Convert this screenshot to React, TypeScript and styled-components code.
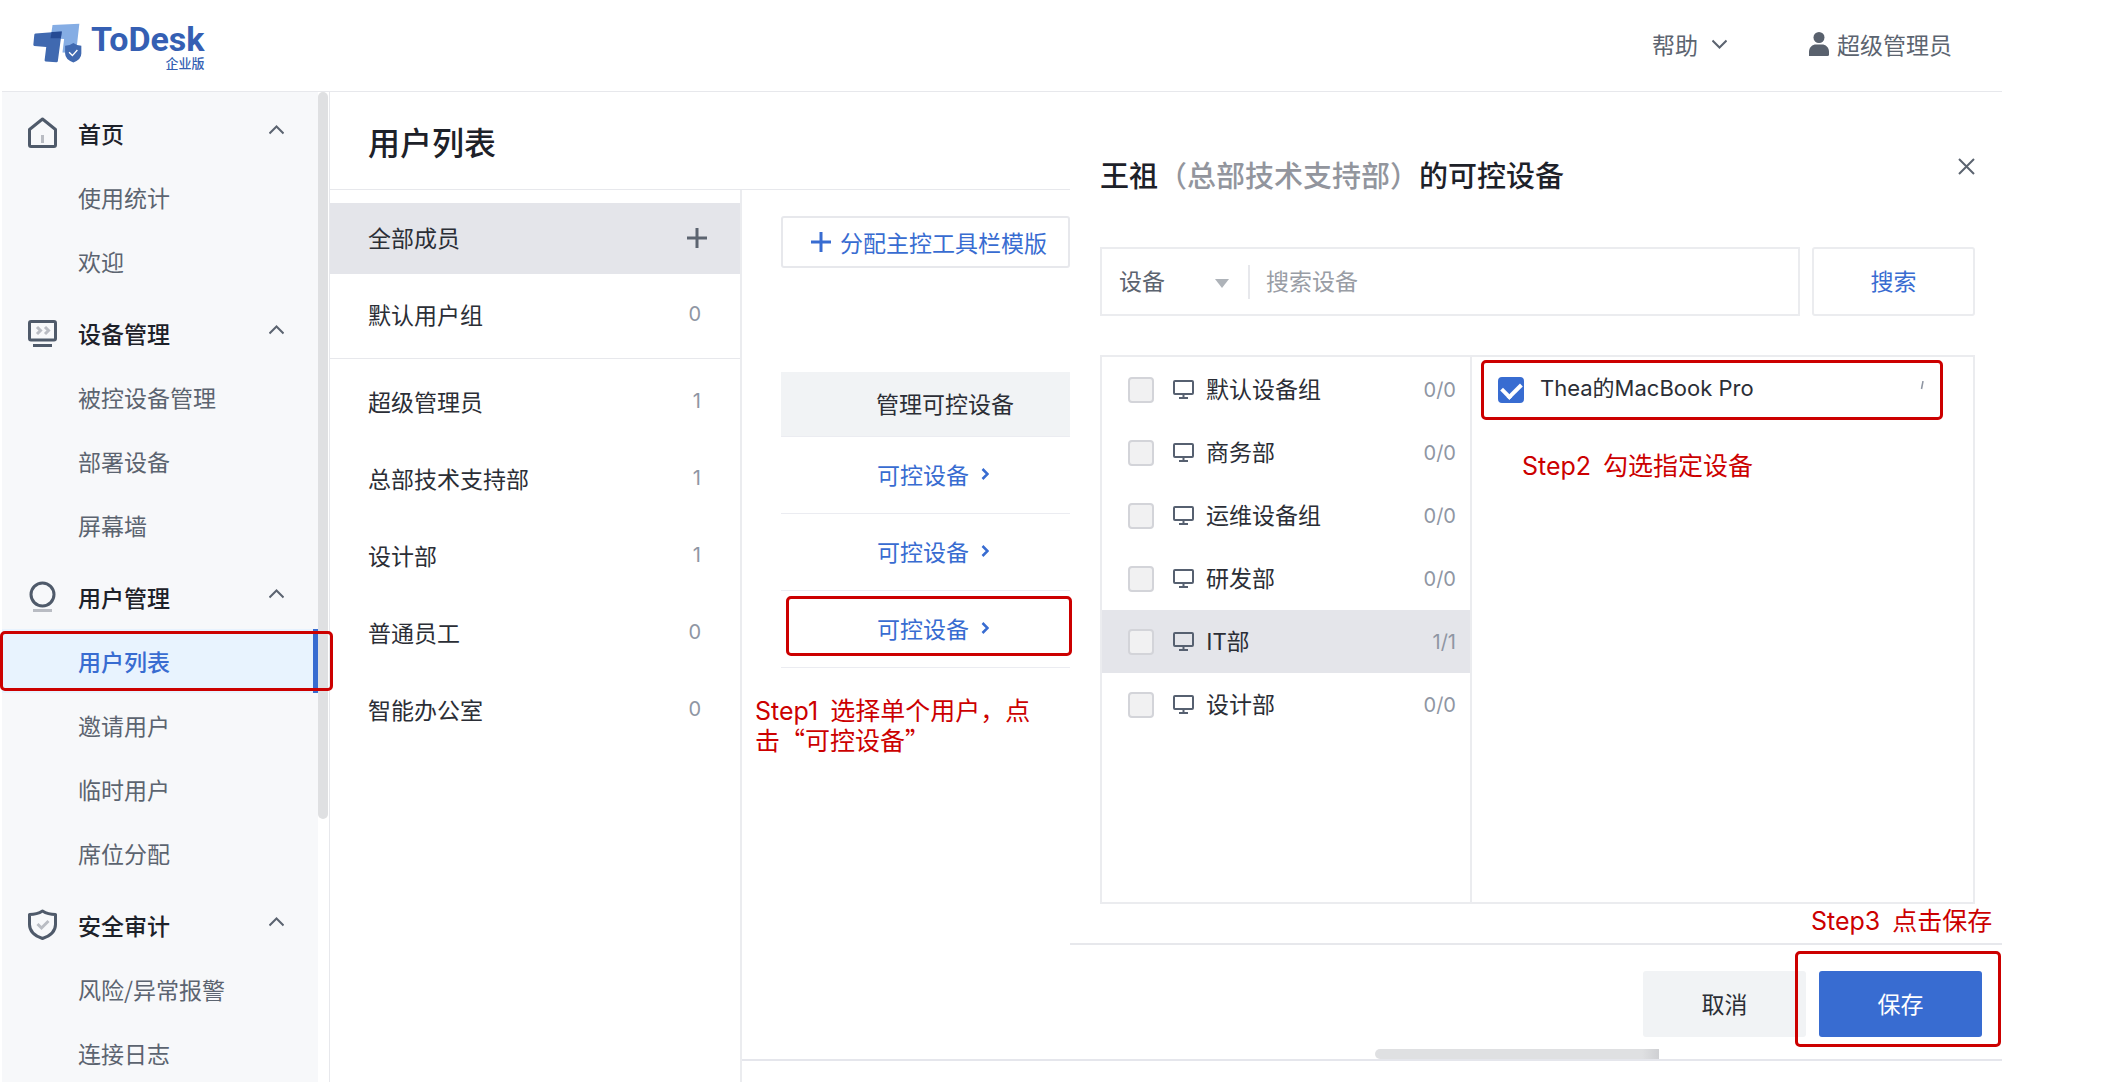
import React, { useState } from "react";
import styled, { createGlobalStyle, css } from "styled-components";

const color = {
  ink: "#1d2129",
  text: "#2b2e36",
  sub: "#5c6470",
  muted: "#8f96a3",
  line: "#e7e8ec",
  fill: "#e4e5ea",
  soft: "#f1f3f5",
  blue: "#386cd1",
  red: "#cc0000",
};

const GlobalStyle = createGlobalStyle`
  * { box-sizing: border-box; }
  body {
    margin: 0;
    background: #fff;
    color: ${color.text};
    font-family: "Noto Sans CJK SC", "Liberation Sans", sans-serif;
    font-size: 23px;
    line-height: 30px;
  }
  button, input, select { font: inherit; color: inherit; }
  h1, h2, ul, p { margin: 0; padding: 0; }
  ul { list-style: none; }
  a { color: inherit; text-decoration: none; }
  svg { display: block; flex: none; }
`;

/* ---------- page frame ---------- */

const Page = styled.div`
  display: flex;
  flex-direction: column;
  height: 100vh;
  padding: 0 125px 0 2px;
  overflow: hidden;
`;

const TopBar = styled.header`
  flex: none;
  display: flex;
  align-items: center;
  justify-content: space-between;
  height: 92px;
  padding: 0 50px 0 31px;
  border-bottom: 1px solid ${color.line};
`;

const Brand = styled.a`
  display: flex;
  align-items: flex-start;
  gap: 9px;
  padding-top: 2px;
  color: #355fb3;
`;

const BrandName = styled.span`
  display: flex;
  flex-direction: column;
  align-items: flex-end;
  font-family: Roboto, sans-serif;
  font-weight: 700;
  font-size: 34px;
  line-height: 32px;
`;

const Edition = styled.span`
  font-family: "Noto Sans CJK SC", sans-serif;
  font-weight: 500;
  font-size: 13px;
  line-height: 16px;
`;

const TopActions = styled.div`
  display: flex;
  gap: 82px;
  padding-bottom: 3px;
  color: ${color.sub};
`;

const PlainButton = styled.button<{ $gap?: number }>`
  display: flex;
  align-items: center;
  gap: ${(p) => p.$gap ?? 0}px;
  padding: 0;
  border: 0;
  background: none;
  cursor: pointer;
`;

const Body = styled.div`
  position: relative;
  flex: 1;
  min-height: 0;
  display: grid;
  grid-template-columns: 328px 412px 328px 1fr;
  grid-template-rows: 98px 1fr 23px;
`;

/* ---------- sidebar ---------- */

const Sidebar = styled.aside`
  grid-row: 1 / 4;
  display: flex;
  min-height: 0;
  overflow: hidden;
  border-right: 1px solid ${color.line};
`;

const Nav = styled.nav`
  flex: 1;
  padding-top: 1px;
  background: #f7f8fa;
`;

const NavGroup = styled.section`
  margin-top: 7px;
`;

const NavHead = styled.button`
  display: grid;
  grid-template-columns: 50px 1fr 15px;
  align-items: center;
  width: 100%;
  height: 65px;
  padding: 0 34px 0 26px;
  border: 0;
  background: none;
  color: ${color.ink};
  font-weight: 500;
  text-align: left;
  cursor: pointer;
`;

const NavLink = styled.a<{ $active?: boolean }>`
  display: flex;
  align-items: center;
  height: 64px;
  padding-left: 76px;
  color: ${color.sub};
  ${(p) =>
    p.$active &&
    css`
      background: #e8f3fe;
      color: ${color.blue};
      font-weight: 500;
      box-shadow: inset -5px 0 ${color.blue};
    `}
`;

const SideTrack = styled.div`
  width: 11px;
`;

const SideThumb = styled.div`
  width: 10px;
  height: 727px;
  border-radius: 5px;
  background: #dfe0e2;
`;

/* ---------- title and member groups ---------- */

const TitleBar = styled.div`
  grid-column: 2 / 4;
  display: flex;
  align-items: center;
  padding: 0 38px;
  border-bottom: 1px solid ${color.line};
`;

const Title = styled.h1`
  color: ${color.ink};
  font-size: 32px;
  font-weight: 500;
  line-height: 40px;
`;

const Groups = styled.div`
  grid-column: 2;
  grid-row: 2 / 4;
  padding-top: 13px;
  border-right: 2px solid #ebecef;
`;

const GroupList = styled.ul`
  display: flex;
  flex-direction: column;
  gap: 6px;
  & + & {
    margin-top: 7px;
    padding-top: 8px;
    border-top: 1px solid ${color.line};
  }
`;

const GroupRow = styled.li<{ $active?: boolean }>`
  display: flex;
  align-items: center;
  justify-content: space-between;
  height: 71px;
  padding: 0 ${(p) => (p.$active ? 33 : 39)}px 3px 38px;
  background: ${(p) => (p.$active ? color.fill : "none")};
`;

const AddButton = styled(PlainButton)`
  padding-top: 2px;
  color: ${color.sub};
`;

const Count = styled.span`
  color: ${color.muted};
  font-family: Inter, sans-serif;
  font-size: 20px;
`;

/* ---------- member table ---------- */

const Members = styled.section`
  position: relative;
  grid-column: 3;
  padding: 26px 0 0 39px;
`;

const AssignButton = styled.button`
  display: flex;
  align-items: center;
  gap: 9px;
  width: 100%;
  height: 52px;
  padding: 0 0 1px 28px;
  border: 2px solid ${color.line};
  border-radius: 3px;
  background: #fff;
  color: ${color.blue};
  white-space: nowrap;
  cursor: pointer;
`;

const Table = styled.table`
  width: 100%;
  margin-top: 104px;
  border-spacing: 0;
  text-align: left;
  th {
    height: 65px;
    padding: 0 0 3px 95px;
    background: ${color.soft};
    border-bottom: 1px solid #ebecf1;
    font-weight: 400;
  }
  td {
    height: 77px;
    padding: 0 0 3px 96px;
    border-bottom: 1px solid #ebecf1;
    color: ${color.blue};
  }
  a {
    display: flex;
    align-items: center;
    gap: 12px;
  }
`;

/* ---------- drawer ---------- */

const Drawer = styled.section`
  grid-column: 4;
  grid-row: 1 / 3;
  display: flex;
  flex-direction: column;
  min-height: 0;
`;

const DrawerMain = styled.div`
  flex: 1;
  display: flex;
  flex-direction: column;
  padding: 54px 27px 39px 30px;
`;

const DrawerHead = styled.div`
  display: flex;
  justify-content: space-between;
  align-items: flex-start;
`;

const DrawerTitle = styled.h2`
  padding: 8px 0 2px;
  color: ${color.ink};
  font-size: 29px;
  font-weight: 500;
  line-height: 40px;
`;

const Dept = styled.span`
  color: #92959d;
`;

const CloseButton = styled(PlainButton)`
  height: 40px;
  color: ${color.sub};
`;

const SearchRow = styled.form`
  display: flex;
  gap: 12px;
  margin-top: 51px;
`;

const SearchBox = styled.div`
  flex: 1;
  display: flex;
  align-items: center;
  height: 69px;
  border: 2px solid #ebecef;
`;

const TypePicker = styled.div`
  display: grid;
  align-items: center;
  width: 148px;
  height: 34px;
  border-right: 2px solid ${color.line};
  color: ${color.sub};
  select, svg { grid-area: 1 / 1; }
  select {
    width: 100%;
    height: 34px;
    padding: 0 0 3px 17px;
    border: 0;
    background: none;
    appearance: none;
  }
  svg {
    justify-self: end;
    margin: 4px 19px 0 0;
    pointer-events: none;
  }
`;

const SearchInput = styled.input`
  flex: 1;
  min-width: 0;
  height: 40px;
  padding: 0 16px 3px;
  border: 0;
  outline: 0;
  background: none;
  &::placeholder { color: #999da5; opacity: 1; }
`;

const Button = styled.button<{ $kind: "outline" | "soft" | "primary" }>`
  width: 163px;
  height: 66px;
  padding: 0 0 3px;
  border: 0;
  border-radius: 3px;
  cursor: pointer;
  ${(p) =>
    p.$kind === "outline" &&
    css`
      height: 69px;
      border: 2px solid #ebecef;
      background: #fff;
      color: ${color.blue};
    `}
  ${(p) => p.$kind === "soft" && css`background: ${color.soft};`}
  ${(p) =>
    p.$kind === "primary" &&
    css`
      background: ${color.blue};
      color: #fff;
    `}
`;

const Picker = styled.div`
  position: relative;
  flex: 1;
  display: grid;
  grid-template-columns: 368px 1fr;
  margin-top: 39px;
  border: 2px solid #ebecef;
`;

const PickerColumn = styled.ul`
  padding-top: 1px;
  & + & { border-left: 2px solid #ebecef; }
`;

const PickerRow = styled.li<{ $active?: boolean; $device?: boolean }>`
  display: flex;
  align-items: center;
  justify-content: space-between;
  height: 63px;
  padding: 0 ${(p) => (p.$device ? 48 : 14)}px 0 26px;
  background: ${(p) => (p.$active ? color.fill : "none")};
  label {
    display: flex;
    align-items: center;
    cursor: pointer;
  }
`;

const Check = styled.input`
  display: grid;
  place-items: center;
  width: 26px;
  height: 26px;
  margin: 0;
  border: 2px solid #d3d4d9;
  border-radius: 4px;
  background: #f1f1f2;
  appearance: none;
  &:checked {
    border-color: ${color.blue};
    background: ${color.blue};
  }
  &:checked::after {
    content: "";
    width: 9px;
    height: 15px;
    margin-bottom: 4px;
    border: solid #fff;
    border-width: 0 4px 4px 0;
    rotate: 45deg;
  }
`;

const GroupName = styled.span`
  display: flex;
  align-items: center;
  gap: 12px;
  margin-left: 19px;
  padding-bottom: 4px;
  svg { margin-top: 3px; }
`;

const DeviceName = styled.span`
  margin-left: 16px;
  padding-bottom: 3px;
  font-family: Inter, "Noto Sans CJK SC", sans-serif;
  font-size: 22px;
`;

/* ---------- drawer footer ---------- */

const DrawerFoot = styled.footer`
  position: relative;
  flex: none;
  display: flex;
  justify-content: flex-end;
  gap: 13px;
  padding: 26px 20px 12px;
  border-top: 2px solid ${color.line};
`;

const PageThumb = styled.div`
  flex: none;
  width: 284px;
  height: 10px;
  margin-left: 305px;
  border-radius: 5px 0 0 5px;
  background: linear-gradient(90deg, #dfe0e2 94%, #cfd0d3);
`;

const BottomStrip = styled.div`
  grid-column: 3 / 5;
  border-top: 2px solid #e5e6ec;
`;

/* ---------- tutorial marks laid over the page ---------- */

type Spot = { $left?: number; $right?: number; $top: number; $width: number; $height?: number };

const place = css<Spot>`
  position: absolute;
  top: ${(p) => p.$top}px;
  ${(p) => (p.$right !== undefined ? `right: ${p.$right}px;` : `left: ${p.$left}px;`)}
  width: ${(p) => p.$width}px;
`;

const Frame = styled.div<Spot>`
  ${place}
  height: ${(p) => p.$height}px;
  border: 3px solid ${color.red};
  border-radius: 5px;
  pointer-events: none;
`;

const Step = styled.p<Spot>`
  ${place}
  color: ${color.red};
  font-size: 25px;
  line-height: 30px;
`;

const StepNo = styled.span`
  margin-right: 12px;
  font-family: Inter, sans-serif;
  line-height: 20px;
`;

/* ---------- drawings ---------- */

const Logo = () => (
  <svg width="49" height="40" viewBox="100 76 148 120" aria-hidden="true">
    <path d="M159 82 L240 78 L230 166 L189 165 L194 124 L153 122 Z" fill="#85ade4" />
    <path d="M108 107 L187 101 L175 191 Q174 194 171 194 L138 192 Q135 191 135 188 L140 148 L104 145 Q101 144 101 141 L104 110 Q105 107 108 107 Z" fill="#4069b0" />
    <path d="M156 103 L187 101 L184 122 L153 122 Z" fill="#264b94" />
    <path d="M222 136 Q232 144 246 144 V168 Q246 186 222 195 Q197 186 197 168 V144 Q212 144 222 136 Z" fill="#4069b0" />
    <path d="M209 164 L219 174 L234 157" fill="none" stroke="#fff" strokeWidth="4" />
  </svg>
);

const ChevronDown = () => (
  <svg width="15" height="10" viewBox="0 0 15 10" fill="none" stroke="#5c6470" strokeWidth="2">
    <path d="M0.5 1.5 L7.5 8.5 L14.5 1.5" />
  </svg>
);

const ChevronUp = () => (
  <svg width="15" height="18" viewBox="0 0 15 18" fill="none" stroke="#5c6470" strokeWidth="2">
    <path d="M0.5 9.5 L7.5 2.5 L14.5 9.5" />
  </svg>
);

const Person = () => (
  <svg width="20" height="24" viewBox="0 0 20 24" fill="#59616d">
    <ellipse cx="10" cy="5.5" rx="5.5" ry="5.5" />
    <path d="M0 24 V20 C0 15 3.5 12.5 7 12.5 H13 C16.5 12.5 20 15 20 20 V22.5 Q20 24 18.5 24 Z" />
  </svg>
);

const Plus = () => (
  <svg width="20" height="20" viewBox="0 0 20 20" fill="none" stroke="currentColor" strokeWidth="3">
    <path d="M10 0 V20 M0 10 H20" />
  </svg>
);

const Monitor = () => (
  <svg width="21" height="19" viewBox="0 0 21 19" fill="none" stroke="#566070" strokeWidth="2">
    <rect x="1" y="1" width="19" height="13" rx="1" />
    <path d="M10.5 14 V18 M6 18 H15" />
  </svg>
);

const navIcons: Record<string, React.ReactNode> = {
  home: (
    <>
      <path d="M1.5 12.5 L14.5 2 L27.5 12.5 V28 Q27.5 29.5 26 29.5 H3 Q1.5 29.5 1.5 28 Z" strokeLinejoin="round" />
      <path d="M14.5 18 V26" stroke="#b9bcc3" />
    </>
  ),
  device: (
    <>
      <rect x="1.5" y="4.5" width="26" height="18.5" rx="1.5" />
      <path d="M5 28.5 H24" />
      <path d="M9 10 L12.5 13.5 L9 17 M17 10 L20.5 13.5 L17 17" stroke="#b9bcc3" />
    </>
  ),
  user: (
    <>
      <circle cx="14.5" cy="13.5" r="11.5" />
      <path d="M5 29.5 H24" stroke="#b9bcc3" />
    </>
  ),
  audit: (
    <>
      <path d="M14.5 2 Q20 5.5 27.5 5.5 V15.5 Q27.5 25 14.5 29.5 Q1.5 25 1.5 15.5 V5.5 Q9 5.5 14.5 2 Z" strokeLinejoin="round" />
      <path d="M9.5 15 L13.5 19 L20.5 12" stroke="#b9bcc3" />
    </>
  ),
};

/* ---------- data ---------- */

const nav = [
  { icon: "home", name: "首页", items: ["使用统计", "欢迎"] },
  { icon: "device", name: "设备管理", items: ["被控设备管理", "部署设备", "屏幕墙"] },
  { icon: "user", name: "用户管理", items: ["用户列表", "邀请用户", "临时用户", "席位分配"] },
  { icon: "audit", name: "安全审计", items: ["风险/异常报警", "连接日志"] },
];

const memberGroups = [
  { name: "超级管理员", count: 1 },
  { name: "总部技术支持部", count: 1 },
  { name: "设计部", count: 1 },
  { name: "普通员工", count: 0 },
  { name: "智能办公室", count: 0 },
];

const deviceGroups = [
  { name: "默认设备组", ratio: "0/0" },
  { name: "商务部", ratio: "0/0" },
  { name: "运维设备组", ratio: "0/0" },
  { name: "研发部", ratio: "0/0" },
  { name: "IT部", ratio: "1/1" },
  { name: "设计部", ratio: "0/0" },
];

export default function App() {
  const [picked, setPicked] = useState(true);

  return (
    <>
      <GlobalStyle />
      <Page>
        <TopBar>
          <Brand href="#">
            <Logo />
            <BrandName>
              ToDesk
              <Edition>企业版</Edition>
            </BrandName>
          </Brand>
          <TopActions>
            <PlainButton $gap={14}>
              帮助
              <ChevronDown />
            </PlainButton>
            <PlainButton $gap={8}>
              <Person />
              超级管理员
            </PlainButton>
          </TopActions>
        </TopBar>

        <Body>
          <Sidebar>
            <Nav>
              {nav.map((group) => (
                <NavGroup key={group.name}>
                  <NavHead>
                    <svg width="29" height="32" viewBox="0 0 29 32" fill="none" stroke="#4f5a6a" strokeWidth="3">
                      {navIcons[group.icon]}
                    </svg>
                    {group.name}
                    <ChevronUp />
                  </NavHead>
                  {group.items.map((item) => (
                    <NavLink key={item} href="#" $active={item === "用户列表"}>
                      {item}
                    </NavLink>
                  ))}
                </NavGroup>
              ))}
            </Nav>
            <SideTrack>
              <SideThumb />
            </SideTrack>
          </Sidebar>

          <TitleBar>
            <Title>用户列表</Title>
          </TitleBar>

          <Groups>
            <GroupList>
              <GroupRow $active>
                全部成员
                <AddButton aria-label="添加">
                  <Plus />
                </AddButton>
              </GroupRow>
              <GroupRow>
                默认用户组 <Count>0</Count>
              </GroupRow>
            </GroupList>
            <GroupList>
              {memberGroups.map((group) => (
                <GroupRow key={group.name}>
                  {group.name} <Count>{group.count}</Count>
                </GroupRow>
              ))}
            </GroupList>
          </Groups>

          <Members>
            <AssignButton>
              <Plus />
              分配主控工具栏模版
            </AssignButton>
            <Table>
              <thead>
                <tr>
                  <th>管理可控设备</th>
                </tr>
              </thead>
              <tbody>
                {[1, 2, 3].map((row) => (
                  <tr key={row}>
                    <td>
                      <a href="#">
                        可控设备
                        <svg width="8" height="12" viewBox="0 0 8 12" fill="none" stroke="currentColor" strokeWidth="2.5">
                          <path d="M1.5 1 L6.5 6 L1.5 11" />
                        </svg>
                      </a>
                    </td>
                  </tr>
                ))}
              </tbody>
            </Table>
            <Frame $left={44} $top={406} $width={286} $height={60} />
            <Step $left={13} $top={504} $width={300}>
              <StepNo>Step1</StepNo>
              选择单个用户，点击“可控设备”
            </Step>
          </Members>

          <Drawer>
            <DrawerMain>
              <DrawerHead>
                <DrawerTitle>
                  王祖<Dept>（总部技术支持部）</Dept>的可控设备
                </DrawerTitle>
                <CloseButton aria-label="关闭">
                  <svg width="17" height="17" viewBox="0 0 17 17" fill="none" stroke="currentColor" strokeWidth="2">
                    <path d="M1 1 L16 16 M16 1 L1 16" />
                  </svg>
                </CloseButton>
              </DrawerHead>

              <SearchRow>
                <SearchBox>
                  <TypePicker>
                    <select aria-label="搜索类型">
                      <option>设备</option>
                    </select>
                    <svg width="14" height="9" viewBox="0 0 14 9" fill="#aeb3b9">
                      <path d="M0 0 H14 L7 9 Z" />
                    </svg>
                  </TypePicker>
                  <SearchInput aria-label="搜索设备" placeholder="搜索设备" />
                </SearchBox>
                <Button type="button" $kind="outline">
                  搜索
                </Button>
              </SearchRow>

              <Picker>
                <PickerColumn>
                  {deviceGroups.map((group) => (
                    <PickerRow key={group.name} $active={group.name === "IT部"}>
                      <label>
                        <Check type="checkbox" />
                        <GroupName>
                          <Monitor />
                          {group.name}
                        </GroupName>
                      </label>
                      <Count>{group.ratio}</Count>
                    </PickerRow>
                  ))}
                </PickerColumn>
                <PickerColumn>
                  <PickerRow $device>
                    <label>
                      <Check type="checkbox" checked={picked} onChange={(e) => setPicked(e.target.checked)} />
                      <DeviceName>Thea的MacBook Pro</DeviceName>
                    </label>
                    <svg width="6" height="18" viewBox="0 0 6 18" fill="none" stroke="#8f96a3" strokeWidth="1.5">
                      <path d="M4 0 L2.5 8" />
                    </svg>
                  </PickerRow>
                </PickerColumn>
                <Frame $left={379} $top={3} $width={462} $height={60} />
                <Step $left={420} $top={92} $width={300}>
                  <StepNo>Step2</StepNo>
                  勾选指定设备
                </Step>
              </Picker>
            </DrawerMain>

            <DrawerFoot>
              <Button $kind="soft">取消</Button>
              <Button $kind="primary">保存</Button>
              <Frame $right={1} $top={6} $width={206} $height={96} />
              <Step $right={0} $top={-41} $width={191}>
                <StepNo>Step3</StepNo>
                点击保存
              </Step>
            </DrawerFoot>
            <PageThumb />
          </Drawer>

          <BottomStrip />
          <Frame $left={-2} $top={539} $width={333} $height={60} />
        </Body>
      </Page>
    </>
  );
}
